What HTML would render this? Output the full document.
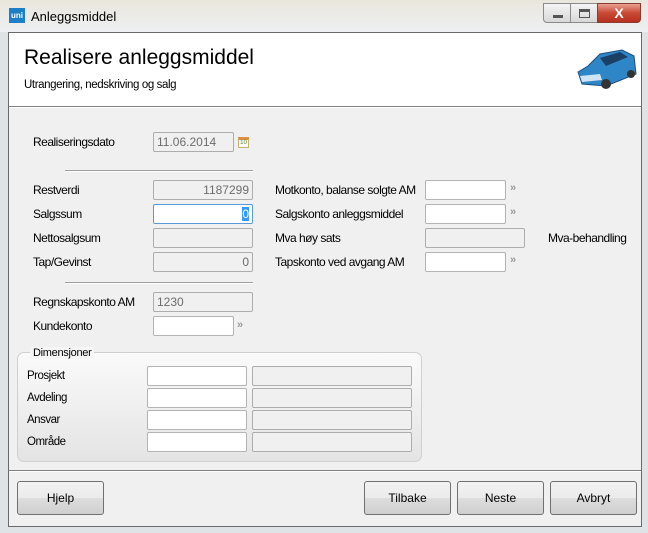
<!DOCTYPE html>
<html><head><meta charset="utf-8"><style>
*{box-sizing:border-box;margin:0;padding:0}
body{width:648px;height:533px;overflow:hidden;background:#dfe3e6;font-family:"Liberation Sans",sans-serif;font-size:12px;color:#000;position:relative}
.a{position:absolute;white-space:nowrap}
.lbl{position:absolute;font-size:12px;letter-spacing:-0.5px}
.in{position:absolute;height:20px;background:#fff;border:1px solid #b4b4b4;border-radius:2px;font-size:12px;padding:2px 3px;color:#6d6d6d}
.ro{background:#f0f0f0;border-color:#adadad}
.arr{position:absolute;font-size:11px;color:#999;font-weight:bold;letter-spacing:-3px}
.btn{position:absolute;height:34px;border:1px solid #707070;border-radius:3px;background:linear-gradient(#f2f2f2,#ebebeb 50%,#dddddd 51%,#cfcfcf);text-align:center;line-height:32px;font-size:12px}
.hr{position:absolute;height:2px;border-top:1px solid #a0a0a0;border-bottom:1px solid #fff}
</style></head><body>
<div class="a" style="left:0;top:0;width:648px;height:32px;background:linear-gradient(#e9e6dc,#eef0f2)"></div>
<div class="a" style="left:9px;top:8px;width:16px;height:15px;background:#1d7fc8;color:#fff;font-size:8px;font-weight:bold;text-align:center;line-height:15px">uni</div>
<div class="a" style="left:31px;top:9px;font-size:13px">Anleggsmiddel</div>
<div class="a" style="left:543px;top:3px;width:28px;height:20px;border:1px solid #8a8a8a;border-radius:0 0 0 4px;background:linear-gradient(#f4f4f4,#d8d8d8)"><div class="a" style="left:9px;top:11px;width:10px;height:3px;background:#555"></div></div>
<div class="a" style="left:570px;top:3px;width:28px;height:20px;border:1px solid #8a8a8a;background:linear-gradient(#f4f4f4,#d8d8d8)"><div class="a" style="left:8px;top:5px;width:11px;height:9px;border:1px solid #555;border-top-width:3px"></div></div>
<div class="a" style="left:597px;top:3px;width:44px;height:20px;border:1px solid #8a3a30;border-radius:0 0 4px 0;background:linear-gradient(#e8a090,#c84a35 50%,#b83020);color:#fff;font-weight:bold;font-size:14px;text-align:center;line-height:18px">X</div>
<div class="a" style="left:8px;top:32px;width:634px;height:495px;border:1px solid #6a6a6a;background:#f0f0f0"></div>
<div class="a" style="left:9px;top:33px;width:632px;height:73px;background:#fff"></div>
<div class="hr" style="left:9px;top:106px;width:632px;border-top-color:#808080"></div>
<div class="a" style="left:24px;top:46px;font-size:21px">Realisere anleggsmiddel</div>
<div class="a" style="left:24px;top:79px;font-size:11.5px;letter-spacing:-0.4px">Utrangering, nedskriving og salg</div>
<svg class="a" style="left:574px;top:46px" width="66" height="44" viewBox="0 0 66 44"><path d="M4 26 L14 20 L26 8 L48 4 L60 10 L62 28 L32 40 L8 38 Z" fill="#2f86c7" stroke="#1a4f80"/><path d="M26 12 L46 6 L54 11 L32 20 Z" fill="#1c3f66"/><path d="M6 30 L26 28 L28 34 L8 36 Z" fill="#cfe4f5"/><circle cx="32" cy="38" r="5" fill="#333"/><circle cx="57" cy="28" r="4" fill="#333"/></svg>
<div class="lbl" style="left:33px;top:135px">Realiseringsdato</div>
<div class="in ro" style="left:153px;top:132px;width:81px">11.06.2014</div>
<div class="a" style="left:238px;top:137px;width:11px;height:11px;border:1px solid #c8b070;background:#fff;border-top:3px solid #e09040;font-size:6px;color:#4a8a30;text-align:center;line-height:7px">10</div>
<div class="hr" style="left:65px;top:170px;width:188px"></div>
<div class="lbl" style="left:33px;top:183px">Restverdi</div>
<div class="in ro" style="left:153px;top:180px;width:100px;text-align:right">1187299</div>
<div class="lbl" style="left:33px;top:207px">Salgssum</div>
<div class="in" style="left:153px;top:204px;width:100px;border-color:#5a9ad8;text-align:right;color:#000"><span style="background:#3399ff;color:#fff">0</span></div>
<div class="lbl" style="left:33px;top:231px">Nettosalgsum</div>
<div class="in ro" style="left:153px;top:228px;width:100px"></div>
<div class="lbl" style="left:33px;top:255px">Tap/Gevinst</div>
<div class="in ro" style="left:153px;top:252px;width:100px;text-align:right">0</div>
<div class="hr" style="left:65px;top:282px;width:188px"></div>
<div class="lbl" style="left:33px;top:295px">Regnskapskonto AM</div>
<div class="in ro" style="left:153px;top:292px;width:100px">1230</div>
<div class="lbl" style="left:33px;top:319px">Kundekonto</div>
<div class="in" style="left:153px;top:316px;width:81px"></div>
<div class="arr" style="left:237px;top:319px">&raquo;</div>
<div class="lbl" style="left:275px;top:183px">Motkonto, balanse solgte AM</div>
<div class="in" style="left:425px;top:180px;width:81px"></div>
<div class="arr" style="left:510px;top:182px">&raquo;</div>
<div class="lbl" style="left:275px;top:207px">Salgskonto anleggsmiddel</div>
<div class="in" style="left:425px;top:204px;width:81px"></div>
<div class="arr" style="left:510px;top:206px">&raquo;</div>
<div class="lbl" style="left:275px;top:231px">Mva høy sats</div>
<div class="in ro" style="left:425px;top:228px;width:100px"></div>
<div class="lbl" style="left:548px;top:231px">Mva-behandling</div>
<div class="lbl" style="left:275px;top:255px">Tapskonto ved avgang AM</div>
<div class="in" style="left:425px;top:252px;width:81px"></div>
<div class="arr" style="left:510px;top:254px">&raquo;</div>
<div class="a" style="left:17px;top:352px;width:405px;height:110px;border:1px solid #d0d0d0;border-radius:7px;background:linear-gradient(#fafafa,#e4e4e4)"></div>
<div class="a" style="left:30px;top:347px;padding:0 3px;background:#f5f5f5;font-size:11px;letter-spacing:-0.3px">Dimensjoner</div>
<div class="lbl" style="left:27px;top:370px;font-size:11.5px">Prosjekt</div>
<div class="lbl" style="left:27px;top:392px;font-size:11.5px">Avdeling</div>
<div class="lbl" style="left:27px;top:414px;font-size:11.5px">Ansvar</div>
<div class="lbl" style="left:27px;top:436px;font-size:11.5px">Område</div>
<div class="in" style="left:147px;top:366px;width:100px"></div>
<div class="in ro" style="left:252px;top:366px;width:160px"></div>
<div class="in" style="left:147px;top:388px;width:100px"></div>
<div class="in ro" style="left:252px;top:388px;width:160px"></div>
<div class="in" style="left:147px;top:410px;width:100px"></div>
<div class="in ro" style="left:252px;top:410px;width:160px"></div>
<div class="in" style="left:147px;top:432px;width:100px"></div>
<div class="in ro" style="left:252px;top:432px;width:160px"></div>
<div class="hr" style="left:9px;top:470px;width:632px;border-top-color:#808080"></div>
<div class="btn" style="left:17px;top:481px;width:87px">Hjelp</div>
<div class="btn" style="left:364px;top:481px;width:87px">Tilbake</div>
<div class="btn" style="left:457px;top:481px;width:87px">Neste</div>
<div class="btn" style="left:550px;top:481px;width:87px">Avbryt</div>
</body></html>
